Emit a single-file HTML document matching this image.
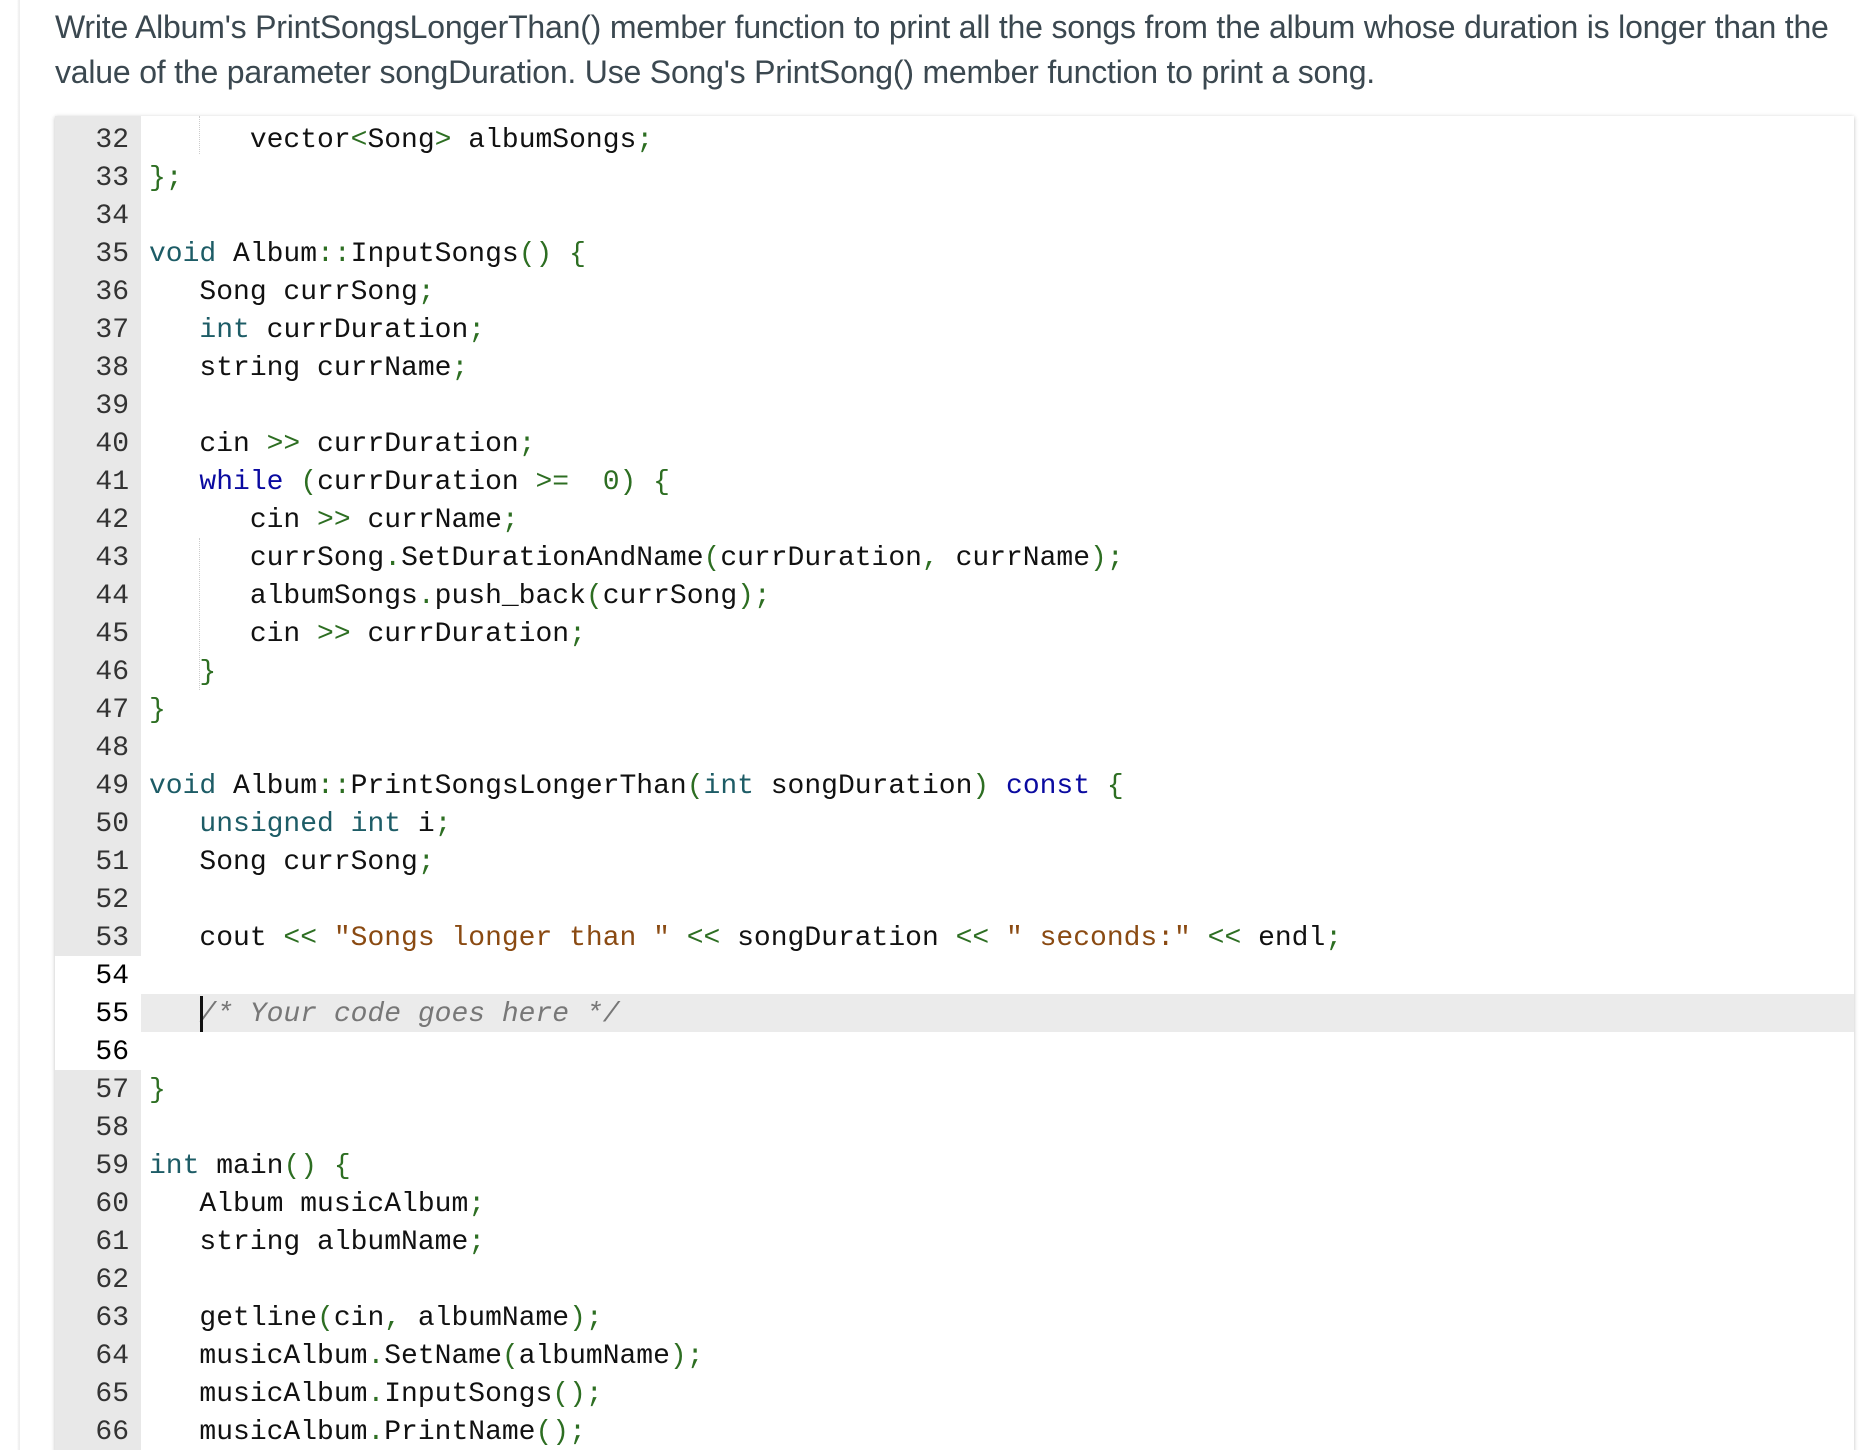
<!DOCTYPE html>
<html><head><meta charset="utf-8"><style>
html,body{margin:0;padding:0;background:#fff;width:1873px;height:1450px;overflow:hidden;position:relative}
.lb{position:absolute;left:0;top:0;width:20px;height:1450px;background:linear-gradient(to right,#fff 0,#fff 17px,#eee 19px,#f6f6f6 22px,#fff 24px)}
.desc{position:absolute;left:55px;top:5px;font-family:"Liberation Sans",sans-serif;font-size:32px;line-height:45px;color:#3b4850;white-space:nowrap;letter-spacing:-0.2px}
.ed{position:absolute;left:55px;top:116px;width:1799px;height:1336px;background:#fff;box-shadow:0 1px 4px rgba(0,0,0,.25);overflow:hidden}
.gut{position:absolute;left:0;top:0;width:86px;height:100%;background:#e8e8e8}
.gw{position:absolute;left:0;top:840px;width:86px;height:114px;background:#fff}
.hl{position:absolute;left:86px;top:878px;right:0;height:38px;background:#ebebeb}
.code{position:absolute;left:0;top:6px;font-family:"Liberation Mono",monospace;font-size:28px;line-height:38px;color:#111;white-space:pre}
.ln{display:inline-block;width:74px;text-align:right;color:#333;margin-right:20px}
.g{color:#2d6e22}.k{color:#1d5c66}.b{color:#0a0aa0}.s{color:#8a4a12}.c{color:#777;font-style:italic}
.guide{position:absolute;left:144px;width:0;border-left:1px dotted #ccc}
.cur{position:absolute;left:145px;top:880px;width:3px;height:36px;background:#111}
</style></head><body>
<div class="lb"></div>
<div class="desc">Write Album's PrintSongsLongerThan() member function to print all the songs from the album whose duration is longer than the<br>value of the parameter songDuration. Use Song's PrintSong() member function to print a song.</div>
<div class="ed">
<div class="gut"></div><div class="gw"></div><div class="hl"></div>
<div class="guide" style="top:0;height:38px"></div>
<div class="guide" style="top:422px;height:152px"></div>
<div class="code"><span class="ln">32</span>      vector<span class="g">&lt;</span>Song<span class="g">&gt;</span> albumSongs<span class="g">;</span>
<span class="ln">33</span><span class="g">};</span>
<span class="ln">34</span>
<span class="ln">35</span><span class="k">void</span> Album<span class="g">::</span>InputSongs<span class="g">() {</span>
<span class="ln">36</span>   Song currSong<span class="g">;</span>
<span class="ln">37</span>   <span class="k">int</span> currDuration<span class="g">;</span>
<span class="ln">38</span>   string currName<span class="g">;</span>
<span class="ln">39</span>
<span class="ln">40</span>   cin <span class="g">&gt;&gt;</span> currDuration<span class="g">;</span>
<span class="ln">41</span>   <span class="b">while</span> <span class="g">(</span>currDuration <span class="g">&gt;=</span>  <span class="g">0) {</span>
<span class="ln">42</span>      cin <span class="g">&gt;&gt;</span> currName<span class="g">;</span>
<span class="ln">43</span>      currSong<span class="g">.</span>SetDurationAndName<span class="g">(</span>currDuration<span class="g">,</span> currName<span class="g">);</span>
<span class="ln">44</span>      albumSongs<span class="g">.</span>push_back<span class="g">(</span>currSong<span class="g">);</span>
<span class="ln">45</span>      cin <span class="g">&gt;&gt;</span> currDuration<span class="g">;</span>
<span class="ln">46</span>   <span class="g">}</span>
<span class="ln">47</span><span class="g">}</span>
<span class="ln">48</span>
<span class="ln">49</span><span class="k">void</span> Album<span class="g">::</span>PrintSongsLongerThan<span class="g">(</span><span class="k">int</span> songDuration<span class="g">)</span> <span class="b">const</span> <span class="g">{</span>
<span class="ln">50</span>   <span class="k">unsigned int</span> i<span class="g">;</span>
<span class="ln">51</span>   Song currSong<span class="g">;</span>
<span class="ln">52</span>
<span class="ln">53</span>   cout <span class="g">&lt;&lt;</span> <span class="s">"Songs longer than "</span> <span class="g">&lt;&lt;</span> songDuration <span class="g">&lt;&lt;</span> <span class="s">" seconds:"</span> <span class="g">&lt;&lt;</span> endl<span class="g">;</span>
<span class="ln" style="color:#000">54</span>
<span class="ln" style="color:#000">55</span>   <span class="c">/* Your code goes here */</span>
<span class="ln" style="color:#000">56</span>
<span class="ln">57</span><span class="g">}</span>
<span class="ln">58</span>
<span class="ln">59</span><span class="k">int</span> main<span class="g">() {</span>
<span class="ln">60</span>   Album musicAlbum<span class="g">;</span>
<span class="ln">61</span>   string albumName<span class="g">;</span>
<span class="ln">62</span>
<span class="ln">63</span>   getline<span class="g">(</span>cin<span class="g">,</span> albumName<span class="g">);</span>
<span class="ln">64</span>   musicAlbum<span class="g">.</span>SetName<span class="g">(</span>albumName<span class="g">);</span>
<span class="ln">65</span>   musicAlbum<span class="g">.</span>InputSongs<span class="g">();</span>
<span class="ln">66</span>   musicAlbum<span class="g">.</span>PrintName<span class="g">();</span>
</div>
<div class="cur"></div>
</div>
</body></html>
